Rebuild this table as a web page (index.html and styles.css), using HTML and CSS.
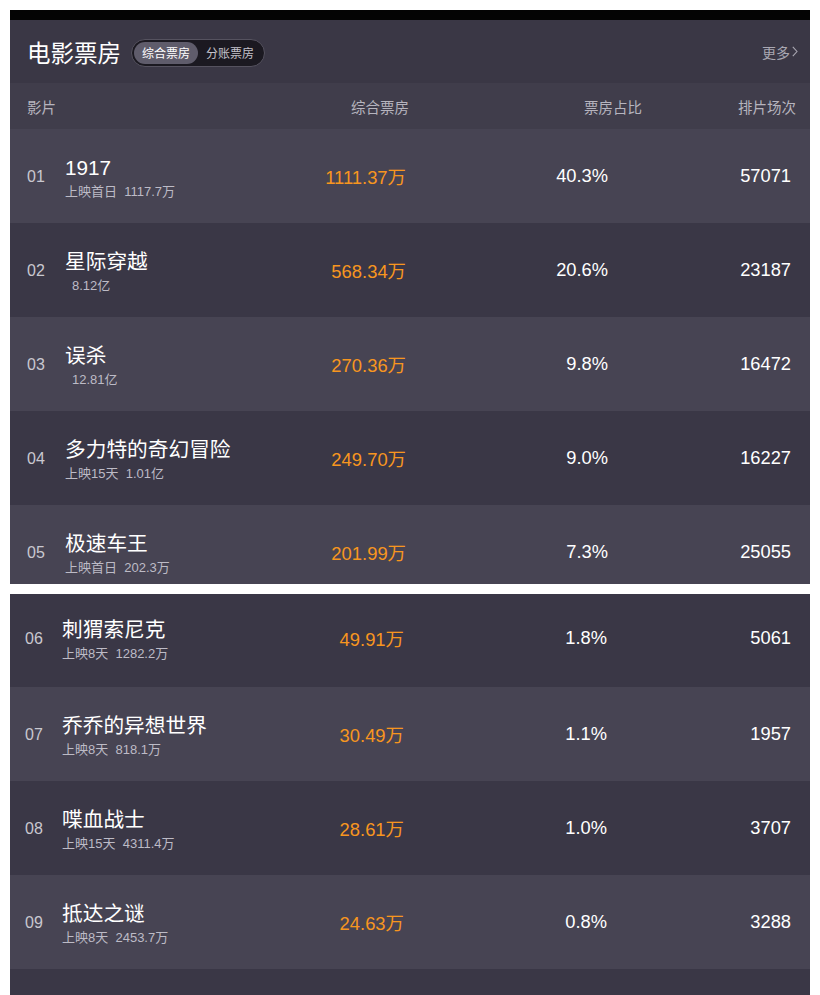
FILE: index.html
```html
<!DOCTYPE html>
<html lang="zh">
<head>
<meta charset="utf-8">
<link rel="stylesheet" href="styles.css">
</head>
<body>
<div class="page">
  <section class="panel panel-top">
    <div class="topbar"></div>
    <header class="head">
      <div class="head-left">
        <h1 class="title">电影票房</h1>
        <div class="toggle">
          <span class="tab active">综合票房</span>
          <span class="tab">分账票房</span>
        </div>
      </div>
      <a class="more">更多<svg class="chev" width="6" height="11" viewBox="0 0 6 11"><path d="M0.8 0.8 L5 5.5 L0.8 10.2" fill="none" stroke="#a9a7b2" stroke-width="1.1"/></svg></a>
    </header>
    <div class="colhead">
      <span>影片</span>
      <span class="c-box">综合票房</span>
      <span class="c-pct">票房占比</span>
      <span class="c-cnt">排片场次</span>
    </div>
    <div class="row light">
      <span class="rank">01</span>
      <div class="film"><div class="name">1917</div><div class="sub">上映首日&nbsp; 1117.7万</div></div>
      <span class="box">1111.37万</span>
      <span class="pct">40.3%</span>
      <span class="cnt">57071</span>
    </div>
    <div class="row dark">
      <span class="rank">02</span>
      <div class="film"><div class="name">星际穿越</div><div class="sub indent">8.12亿</div></div>
      <span class="box">568.34万</span>
      <span class="pct">20.6%</span>
      <span class="cnt">23187</span>
    </div>
    <div class="row light">
      <span class="rank">03</span>
      <div class="film"><div class="name">误杀</div><div class="sub indent">12.81亿</div></div>
      <span class="box">270.36万</span>
      <span class="pct">9.8%</span>
      <span class="cnt">16472</span>
    </div>
    <div class="row dark">
      <span class="rank">04</span>
      <div class="film"><div class="name">多力特的奇幻冒险</div><div class="sub">上映15天&nbsp; 1.01亿</div></div>
      <span class="box">249.70万</span>
      <span class="pct">9.0%</span>
      <span class="cnt">16227</span>
    </div>
    <div class="row light">
      <span class="rank">05</span>
      <div class="film"><div class="name">极速车王</div><div class="sub">上映首日&nbsp; 202.3万</div></div>
      <span class="box">201.99万</span>
      <span class="pct">7.3%</span>
      <span class="cnt">25055</span>
    </div>
  </section>

  <section class="panel panel-bottom">
    <div class="row dark first">
      <span class="rank">06</span>
      <div class="film"><div class="name">刺猬索尼克</div><div class="sub">上映8天&nbsp; 1282.2万</div></div>
      <span class="box">49.91万</span>
      <span class="pct">1.8%</span>
      <span class="cnt">5061</span>
    </div>
    <div class="row light">
      <span class="rank">07</span>
      <div class="film"><div class="name">乔乔的异想世界</div><div class="sub">上映8天&nbsp; 818.1万</div></div>
      <span class="box">30.49万</span>
      <span class="pct">1.1%</span>
      <span class="cnt">1957</span>
    </div>
    <div class="row dark">
      <span class="rank">08</span>
      <div class="film"><div class="name">喋血战士</div><div class="sub">上映15天&nbsp; 4311.4万</div></div>
      <span class="box">28.61万</span>
      <span class="pct">1.0%</span>
      <span class="cnt">3707</span>
    </div>
    <div class="row light">
      <span class="rank">09</span>
      <div class="film"><div class="name">抵达之谜</div><div class="sub">上映8天&nbsp; 2453.7万</div></div>
      <span class="box">24.63万</span>
      <span class="pct">0.8%</span>
      <span class="cnt">3288</span>
    </div>
    <div class="row dark"></div>
  </section>
</div>
</body>
</html>
```

FILE: styles.css
```css
* { box-sizing: border-box; margin: 0; padding: 0; }

html, body {
  background: #ffffff;
  overflow: hidden;
}

body {
  font-family: "Liberation Sans", Arial, "Noto Sans CJK SC", sans-serif;
  color: #ffffff;
}

.page {
  padding: 10px 10px 0 10px;
  display: flex;
  flex-direction: column;
  gap: 10px;
}

.panel {
  width: 800px;
  overflow: hidden;
  display: flex;
  flex-direction: column;
}

.panel-top { height: 574px; }
.panel-bottom { height: 401px; }

.topbar {
  height: 10px;
  flex: none;
  background: #040404;
}

.head {
  height: 63px;
  flex: none;
  background: #3a3745;
  display: flex;
  align-items: center;
  justify-content: space-between;
  padding: 0 12px 0 17px;
}

.head-left {
  display: flex;
  align-items: center;
  gap: 10px;
}

.title {
  font-size: 23.5px;
  font-weight: normal;
  color: #ffffff;
  font-family: "Noto Sans CJK SC", sans-serif;
}

.toggle {
  display: flex;
  align-items: center;
  height: 28px;
  padding: 2px;
  border-radius: 14px;
  background: #1b1921;
  border: 1px solid #55525f;
  margin-top: 2px;
}

.tab {
  font-size: 12px;
  color: #c4c2cb;
  padding: 0 8px;
  height: 22px;
  line-height: 22px;
  border-radius: 11px;
  font-family: "Noto Sans CJK SC", sans-serif;
}

.tab.active {
  background: #5f5c6b;
  color: #ffffff;
}

.more {
  font-size: 14px;
  color: #a9a7b2;
  display: flex;
  align-items: center;
  gap: 2px;
  font-family: "Noto Sans CJK SC", sans-serif;
}

.colhead {
  height: 46px;
  flex: none;
  background: #403d4b;
  display: grid;
  grid-template-columns: 238px 144px 1fr auto;
  align-items: center;
  padding: 0 14px 0 17px;
  font-size: 14.5px;
  color: #b6b4be;
  font-family: "Noto Sans CJK SC", sans-serif;
}

.c-box { text-align: right; }
.c-pct { padding-left: 175px; }
.c-cnt { text-align: right; }

.row {
  height: 94px;
  flex: none;
  display: grid;
  grid-template-columns: 38px 201px 140px 202px 183px;
  align-items: center;
  padding: 0 19px 0 17px;
}

.row.light { background: #474453; }
.row.dark { background: #3a3746; }

.panel-bottom .row {
  padding-left: 15px;
  grid-template-columns: 37px 202px 140px 203px 184px;
}
.panel-bottom .row.first {
  height: 93px;
  padding-bottom: 5px;
}

.rank {
  font-size: 16px;
  color: #c9c8d0;
  padding-top: 2px;
}

.film {
  display: flex;
  flex-direction: column;
  padding-top: 3px;
}

.name {
  font-size: 20.7px;
  line-height: 24px;
  color: #ffffff;
  font-family: "Liberation Sans", "Noto Sans CJK SC", sans-serif;
}

.sub {
  font-size: 13px;
  line-height: 17px;
  margin-top: 3px;
  color: #bdbbc6;
}

.sub.indent { padding-left: 7px; }

.box {
  font-size: 18.4px;
  color: #f7961f;
  text-align: right;
}

.pct {
  font-size: 18.3px;
  color: #ffffff;
  text-align: right;
}

.cnt {
  font-size: 18.3px;
  color: #ffffff;
  text-align: right;
}
```
